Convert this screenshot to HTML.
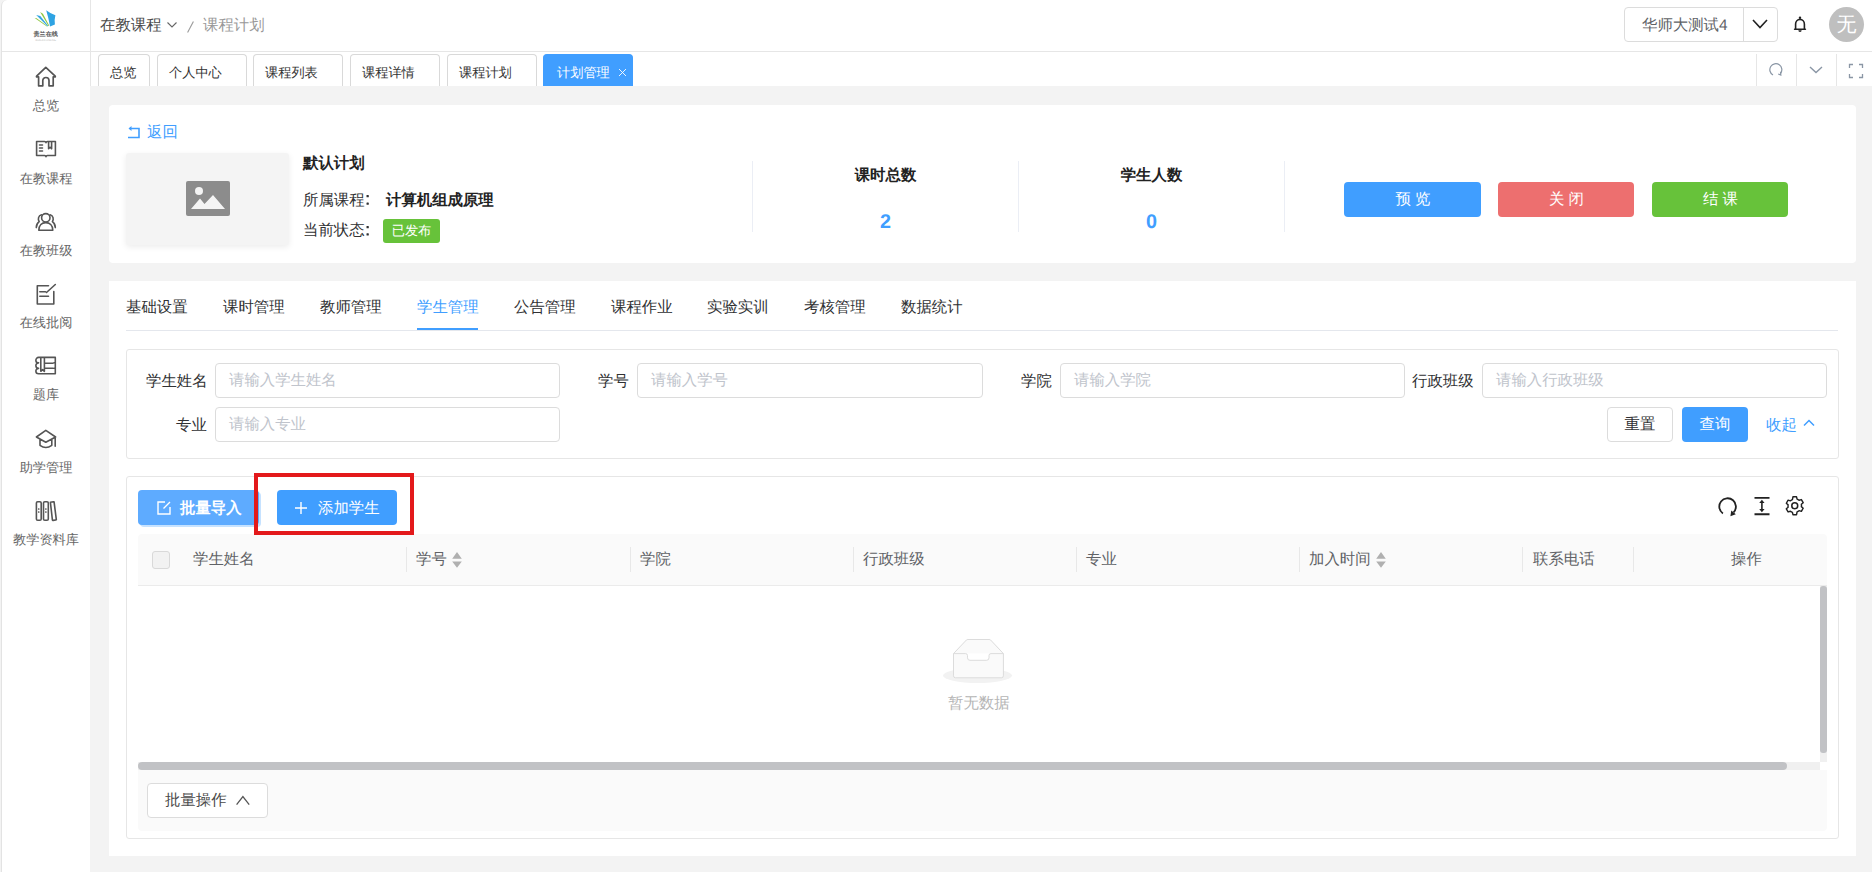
<!DOCTYPE html>
<html><head><meta charset="utf-8">
<style>
*{box-sizing:border-box;margin:0;padding:0}
html,body{width:1872px;height:872px;overflow:hidden;background:#f3f3f3;font-family:"Liberation Sans",sans-serif;color:#303133;text-rendering:geometricPrecision}
.a{position:absolute}
.t{position:absolute;white-space:nowrap;line-height:1;padding-top:1px}
#side{left:1px;top:0;width:89px;height:872px;background:#fff;border-left:1px solid #e3e3e3;border-top-left-radius:6px}
#head{left:91px;top:0;width:1781px;height:52px;background:#fff;border-bottom:1px solid #e6e6e6}
#tabbar{left:91px;top:52px;width:1781px;height:34px;background:#fff}
.tab{position:absolute;top:54px;height:32px;border:1px solid #d9d9d9;border-bottom:none;border-radius:4px 4px 0 0;background:#fff;font-size:13.2px;color:#333}
.tab span{position:absolute;top:11px;left:11px;line-height:13px}
.card{position:absolute;left:109px;width:1747px;background:#fff;border-radius:4px}
.nav{position:absolute;left:1px;width:90px;text-align:center;font-size:13.2px;color:#666;line-height:13px}
.nav svg{display:block;margin:0 auto}
.btn{position:absolute;border-radius:4px;color:#fff;font-size:15.4px;text-align:center;line-height:35px;letter-spacing:4px;padding-left:5px}
.ctab{position:absolute;top:299px;font-size:15.4px;line-height:15px;color:#303133;padding-top:1px}
.lbl{position:absolute;font-size:15.4px;line-height:15px;color:#303133;white-space:nowrap;padding-top:1px}
.inp{position:absolute;height:35px;border:1px solid #dcdcdc;border-radius:4px;background:#fff;font-size:15.4px;color:#c0c4cc;padding-left:13px;line-height:33px;white-space:nowrap}
.th{position:absolute;top:551px;font-size:15.4px;line-height:15px;color:#606266;white-space:nowrap;padding-top:1px}
.cd{position:absolute;top:547px;width:1px;height:25px;background:#e8e8e8}
</style></head><body>
<div id="side" class="a"></div>
<div id="head" class="a"></div>
<div id="tabbar" class="a"></div>
<div class="a" style="left:90px;top:0;width:1px;height:86px;background:#e6e6e6"></div>
<div class="a" style="left:2px;top:51px;width:89px;height:1px;background:#e6e6e6"></div>

<!-- logo -->
<svg class="a" style="left:30px;top:6px" width="32" height="38" viewBox="0 0 32 38">
 <path d="M4.6 12.1 L6.6 12.3 L17.6 20.2 L16.9 20.4 Z" fill="#8dc63f"/>
 <path d="M6.2 9.1 L10.3 10.1 L18.3 20.1 L17.5 20.3 Z" fill="#35a7e3"/>
 <path d="M10.1 6.0 L12.9 7.7 L19.3 19.8 L18.5 20.1 Z" fill="#8dc63f"/>
 <path d="M16.2 4.2 Q20.5 7.6 25.4 9.2 Q24.2 13.8 24.9 18.4 Q22.4 19.2 20.1 20.6 Q18.6 12.2 16.2 4.2 Z" fill="#2ea3e3"/>
 <text x="15.7" y="30" font-size="6.1" text-anchor="middle" fill="#555" font-weight="bold">贵兰在线</text>
 <text x="15.7" y="34.9" font-size="2.7" text-anchor="middle" fill="#bbb">GUILAN  ONLINE</text>
</svg>

<!-- breadcrumb -->
<div class="t" style="left:100px;top:17px;font-size:15.4px;color:#4a4a4a">在教课程</div>
<svg class="a" style="left:166px;top:20px" width="12" height="10" viewBox="0 0 12 10"><path d="M1.5 2.5 L6 7 L10.5 2.5" fill="none" stroke="#666" stroke-width="1.1"/></svg>
<svg class="a" style="left:185px;top:20px" width="10" height="14"><path d="M8.4 1.5 L2.6 12.6" stroke="#999" stroke-width="1.1"/></svg>
<div class="t" style="left:203px;top:17px;font-size:15.4px;color:#999">课程计划</div>

<!-- header right -->
<div class="a" style="left:1624px;top:7px;width:154px;height:35px;border:1px solid #dcdcdc;border-radius:4px;background:#fff"></div>
<div class="a" style="left:1743px;top:8px;width:1px;height:33px;background:#dcdcdc"></div>
<div class="t" style="left:1642px;top:17px;font-size:15.4px;color:#606266">华师大测试4</div>
<svg class="a" style="left:1751px;top:17px" width="18" height="14" viewBox="0 0 18 14"><path d="M2 3 L9 10.5 L16 3" fill="none" stroke="#222" stroke-width="1.6"/></svg>
<svg class="a" style="left:1790px;top:15px" width="20" height="20" viewBox="0 0 20 20"><circle cx="10" cy="2.8" r="1.2" fill="#222"/><path d="M5.6 14 V9 a4.4 4.6 0 0 1 8.8 0 V14 M4.6 14.2 H15.4" fill="none" stroke="#222" stroke-width="1.6" stroke-linejoin="round" stroke-linecap="round"/><path d="M8.3 15.2 a1.7 1.7 0 0 0 3.4 0 Z" fill="#222"/></svg>
<div class="a" style="left:1829px;top:7px;width:35px;height:35px;border-radius:50%;background:#bfbfbf;color:#fff;font-size:20px;line-height:37px;text-align:center">无</div>

<!-- tabs -->
<div class="tab" style="left:98px;width:52px"><span>总览</span></div>
<div class="tab" style="left:157px;width:90px"><span>个人中心</span></div>
<div class="tab" style="left:253px;width:90px"><span>课程列表</span></div>
<div class="tab" style="left:350px;width:90px"><span>课程详情</span></div>
<div class="tab" style="left:447px;width:90px"><span>课程计划</span></div>
<div class="tab" style="left:543px;width:90px;background:#409eff;border-color:#409eff;color:#fff"><span style="left:13px">计划管理</span><svg style="position:absolute;left:74px;top:13px" width="9" height="9" viewBox="0 0 9 9"><path d="M1 1 L8 8 M8 1 L1 8" stroke="#fff" stroke-width="0.9"/></svg></div>
<!-- tabbar right icons -->
<div class="a" style="left:1756px;top:54px;width:1px;height:32px;background:#e6e6e6"></div>
<div class="a" style="left:1796px;top:54px;width:1px;height:32px;background:#e6e6e6"></div>
<div class="a" style="left:1836px;top:54px;width:1px;height:32px;background:#e6e6e6"></div>
<svg class="a" style="left:1768px;top:62px" width="16" height="16" viewBox="0 0 16 16"><path d="M12.5 11.5 A6 6 0 1 0 5 13" fill="none" stroke="#8a96a5" stroke-width="1.2"/><path d="M12.5 9.8 L12.8 13 L10.2 12" fill="none" stroke="#8a96a5" stroke-width="1.2"/></svg>
<svg class="a" style="left:1808px;top:64px" width="16" height="12" viewBox="0 0 16 12"><path d="M2 3 L8 8.5 L14 3" fill="none" stroke="#8a96a5" stroke-width="1.4"/></svg>
<svg class="a" style="left:1848px;top:63px" width="16" height="16" viewBox="0 0 16 16"><path d="M1.5 5 V1.5 H5 M11 1.5 H14.5 V5 M14.5 11 V14.5 H11 M5 14.5 H1.5 V11" fill="none" stroke="#8a96a5" stroke-width="1.3"/></svg>

<!-- sidebar nav -->
<svg class="a" style="left:0;top:0" width="91" height="560" viewBox="0 0 91 560" fill="none" stroke="#555" stroke-width="1.6" stroke-linejoin="round" stroke-linecap="round">
<path d="M45.8 67.3 L36.6 76.2 Q36.2 76.9 37 76.9 H38.6 V85.8 H42.8 V80.6 a3 3 0 0 1 6.2 0 V85.8 H53.2 V76.9 H54.8 Q55.6 76.9 55.2 76.2 Z" stroke-width="1.7"/>
<path d="M36.6 141.5 H44.5 Q46 141.5 46 142.8 Q46 141.5 47.5 141.5 H55.4 V155.5 H47.5 Q46 155.5 46 156.8 Q46 155.5 44.5 155.5 H36.6 Z M39.5 145 H42.5 M39.5 148 H42.5 M39.5 151 H42.5 M48.6 141.8 V148.8 L50.1 147.3 L51.6 148.8 V141.8"/>
<circle cx="45.8" cy="217.8" r="4.2"/>
<path d="M38.8 230.3 C38.8 225.2 42 222.6 45.8 222.6 C49.6 222.6 52.8 225.2 52.8 230.3 Z M41.5 214.7 C38.3 215.6 37.6 219.3 39.2 221.6 C37.2 223 36.3 225 36.3 227.6 M50.1 214.7 C53.3 215.6 54 219.3 52.4 221.6 C54.4 223 55.3 225 55.3 227.6"/>
<path d="M48.5 285.8 H37.3 V304 H53.8 V291.5 M39.8 291.8 H45.5 M39.8 296.2 H48.5 M46.5 292.5 L55.3 284.5"/>
<path d="M38.6 357.4 H55.3 V373.8 H38.6 M38.6 357.4 a2.7 2.7 0 0 0 0 5.47 a2.7 2.7 0 0 0 0 5.47 a2.7 2.7 0 0 0 0 5.47 M55.3 362.8 H54 M55.3 368.3 H54 M40.8 357.6 V371.3 L42.6 369.6 L44.4 371.3 V357.6 M44.6 363.3 H53 M44.6 368.3 H53"/>
<path d="M36.4 437 L45.8 430.4 L55.6 437 L45.8 442.2 Z M40 439.5 V445.3 Q45.8 449.6 51.8 445.3 V439.5 M55.2 438 V446.2"/>
<rect x="36.4" y="501.8" width="4.8" height="18.4" rx="1.3"/>
<rect x="43.5" y="501.8" width="4.8" height="18.4" rx="1.3"/>
<path d="M50.4 502.3 L53.4 501.7 Q54 501.6 54.1 502.2 L56.3 519.3 Q56.4 519.9 55.8 520 L53.1 520.4 Q52.5 520.5 52.4 519.9 Z"/>
<path d="M38.8 508.5 V509.5 M38.8 511.5 V512.5 M45.9 508.5 V509.5 M45.9 511.5 V512.5" stroke-width="1.2"/>
</svg>
<div class="nav" style="top:99px">总览</div>
<div class="nav" style="top:172px">在教课程</div>
<div class="nav" style="top:244px">在教班级</div>
<div class="nav" style="top:316px">在线批阅</div>
<div class="nav" style="top:388px">题库</div>
<div class="nav" style="top:461px">助学管理</div>
<div class="nav" style="top:533px">教学资料库</div>

<!-- card 1 -->
<div class="card" style="top:105px;height:158px"></div>
<svg class="a" style="left:127px;top:125px" width="14" height="14" viewBox="0 0 14 14"><path d="M1 12.5 H12 V3.5 H2.5" fill="none" stroke="#409eff" stroke-width="1.6"/><path d="M4.5 1 L1.5 3.5 L4.5 6 Z" fill="#409eff"/></svg>
<div class="t" style="left:147px;top:124px;font-size:15.4px;color:#409eff">返回</div>
<div class="a" style="left:126px;top:153px;width:163px;height:92px;background:#f4f4f4;border-radius:3px;box-shadow:0 2px 6px rgba(0,0,0,0.08)"></div>
<svg class="a" style="left:186px;top:181px" width="44" height="35" viewBox="0 0 44 35"><rect x="0" y="0" width="44" height="35" rx="2" fill="#8c8c8c"/><circle cx="13" cy="10" r="4" fill="#f4f4f4"/><path d="M5 28 L14 17.5 L18.5 23 L27 14 L39 28 Z" fill="#f4f4f4"/></svg>
<div class="t" style="left:303px;top:155px;font-size:15.4px;font-weight:bold;color:#222">默认计划</div>
<div class="t" style="left:303px;top:192px;font-size:15.4px;color:#303133">所属课程</div>
<svg class="a" style="left:365px;top:193px" width="6" height="14"><rect x="1.5" y="2" width="2.3" height="2.3" rx="0.6" fill="#303133"/><rect x="1.5" y="9.5" width="2.3" height="2.3" rx="0.6" fill="#303133"/></svg>
<div class="t" style="left:386px;top:192px;font-size:15.4px;font-weight:bold;color:#222">计算机组成原理</div>
<div class="t" style="left:303px;top:222px;font-size:15.4px;color:#303133">当前状态</div>
<svg class="a" style="left:365px;top:224px" width="6" height="14"><rect x="1.5" y="2" width="2.3" height="2.3" rx="0.6" fill="#303133"/><rect x="1.5" y="9.2" width="2.3" height="2.3" rx="0.6" fill="#303133"/></svg>
<div class="a" style="left:383px;top:219px;width:57px;height:24px;background:#67c23a;border-radius:3px;color:#fff;font-size:13.2px;line-height:24px;text-align:center">已发布</div>

<div class="a" style="left:752px;top:161px;width:1px;height:71px;background:#ebeef5"></div>
<div class="a" style="left:1018px;top:161px;width:1px;height:71px;background:#ebeef5"></div>
<div class="a" style="left:1284px;top:161px;width:1px;height:71px;background:#ebeef5"></div>
<div class="t" style="left:753px;width:265px;text-align:center;top:167px;font-size:15.4px;font-weight:bold;color:#222">课时总数</div>
<div class="t" style="left:1019px;width:265px;text-align:center;top:167px;font-size:15.4px;font-weight:bold;color:#222">学生人数</div>
<div class="t" style="left:753px;width:265px;text-align:center;top:212px;font-size:19.8px;font-weight:bold;color:#409eff">2</div>
<div class="t" style="left:1019px;width:265px;text-align:center;top:212px;font-size:19.8px;font-weight:bold;color:#409eff">0</div>

<div class="btn" style="left:1344px;top:182px;width:137px;height:35px;background:#409eff">预览</div>
<div class="btn" style="left:1498px;top:182px;width:136px;height:35px;background:#ed6f6f">关闭</div>
<div class="btn" style="left:1652px;top:182px;width:136px;height:35px;background:#67c23a">结课</div>

<!-- card 2 -->
<div class="card" style="top:281px;height:575px;border-radius:0"></div>
<div class="ctab" style="left:126px">基础设置</div>
<div class="ctab" style="left:223px">课时管理</div>
<div class="ctab" style="left:320px">教师管理</div>
<div class="ctab" style="left:417px;color:#409eff">学生管理</div>
<div class="ctab" style="left:514px">公告管理</div>
<div class="ctab" style="left:611px">课程作业</div>
<div class="ctab" style="left:707px">实验实训</div>
<div class="ctab" style="left:804px">考核管理</div>
<div class="ctab" style="left:901px">数据统计</div>
<div class="a" style="left:126px;top:329px;width:1712px;height:2px;background:#e4e7ed;height:1px;top:330px"></div>
<div class="a" style="left:417px;top:328px;width:61px;height:2px;background:#409eff"></div>

<!-- filter -->
<div class="a" style="left:126px;top:349px;width:1713px;height:110px;border:1px solid #e6e6e6;border-radius:3px"></div>
<div class="lbl" style="left:146px;top:373px">学生姓名</div>
<div class="inp" style="left:215px;top:363px;width:345px">请输入学生姓名</div>
<div class="lbl" style="left:598px;top:373px">学号</div>
<div class="inp" style="left:637px;top:363px;width:346px">请输入学号</div>
<div class="lbl" style="left:1021px;top:373px">学院</div>
<div class="inp" style="left:1060px;top:363px;width:345px">请输入学院</div>
<div class="lbl" style="left:1412px;top:373px">行政班级</div>
<div class="inp" style="left:1482px;top:363px;width:345px">请输入行政班级</div>
<div class="lbl" style="left:176px;top:417px">专业</div>
<div class="inp" style="left:215px;top:407px;width:345px">请输入专业</div>
<div class="a" style="left:1607px;top:407px;width:66px;height:35px;border:1px solid #dcdcdc;border-radius:4px;font-size:15.4px;line-height:33px;text-align:center;color:#303133">重置</div>
<div class="a" style="left:1682px;top:407px;width:66px;height:35px;background:#409eff;border-radius:4px;font-size:15.4px;line-height:35px;text-align:center;color:#fff">查询</div>
<div class="t" style="left:1766px;top:417px;font-size:15.4px;color:#409eff">收起</div>
<svg class="a" style="left:1802px;top:417px" width="14" height="12" viewBox="0 0 14 12"><path d="M2 8.5 L7 3.5 L12 8.5" fill="none" stroke="#409eff" stroke-width="1.5"/></svg>

<!-- table panel -->
<div class="a" style="left:126px;top:476px;width:1713px;height:363px;border:1px solid #e6e6e6;border-radius:3px"></div>
<div class="a" style="left:138px;top:490px;width:121px;height:35px;background:#5eabff;border-radius:4px;box-shadow:2px 2px 0 0 #c6e2ff"></div>
<svg class="a" style="left:156px;top:500px" width="16" height="16" viewBox="0 0 16 16"><path d="M9 2 H2 V14 H14 V7 M7.5 8.5 L14 2" fill="none" stroke="#fff" stroke-width="1.4"/></svg>
<div class="t" style="left:180px;top:500px;font-size:15.4px;font-weight:bold;color:#fff">批量导入</div>
<div class="a" style="left:277px;top:490px;width:120px;height:35px;background:#409eff;border-radius:4px"></div>
<svg class="a" style="left:293px;top:500px" width="16" height="16" viewBox="0 0 16 16"><path d="M8 2 V14 M2 8 H14" fill="none" stroke="#fff" stroke-width="1.4"/></svg>
<div class="t" style="left:318px;top:500px;font-size:15.4px;color:#fff">添加学生</div>
<div class="a" style="left:254px;top:473px;width:160px;height:62px;border:4px solid #e3191b;z-index:5"></div>

<svg class="a" style="left:1716px;top:495px" width="24" height="24" viewBox="0 0 24 24"><path d="M6.9 18.4 A8.3 8.3 0 1 1 17.6 17.3" fill="none" stroke="#222" stroke-width="1.8"/><path d="M14.4 21.2 L15.3 15.6 L19.8 19.2 Z" fill="#222"/></svg>
<svg class="a" style="left:1752px;top:494px" width="20" height="24" viewBox="0 0 20 24"><path d="M2.5 3.9 H17.5 M2.5 20.2 H17.5" fill="none" stroke="#222" stroke-width="1.9"/><path d="M9.9 7.5 V16.5" stroke="#222" stroke-width="1.6"/><path d="M7.2 9 L9.9 5.8 L12.6 9 Z M7.2 15 L9.9 18.2 L12.6 15 Z" fill="#222"/></svg>
<svg class="a" style="left:1784px;top:495px" width="21.5" height="21.5" viewBox="0 0 24 24"><circle cx="12" cy="12" r="3.3" fill="none" stroke="#222" stroke-width="1.7"/><path d="M10 2 h4 l0.6 2.6 a8 8 0 0 1 2.2 1.3 l2.6-0.8 2 3.5 -2 1.8 a8 8 0 0 1 0 2.6 l2 1.8 -2 3.5 -2.6-0.8 a8 8 0 0 1 -2.2 1.3 L14 22 h-4 l-0.6-2.6 a8 8 0 0 1 -2.2-1.3 l-2.6 0.8 -2-3.5 2-1.8 a8 8 0 0 1 0-2.6 l-2-1.8 2-3.5 2.6 0.8 a8 8 0 0 1 2.2-1.3 Z" fill="none" stroke="#222" stroke-width="1.6" stroke-linejoin="round"/></svg>

<!-- table header -->
<div class="a" style="left:138px;top:534px;width:1689px;height:52px;background:#fafafa;border-bottom:1px solid #ebebeb;border-radius:4px 4px 0 0"></div>
<div class="a" style="left:152px;top:551px;width:18px;height:18px;border:1px solid #d9d9d9;border-radius:3px;background:#f2f2f2"></div>
<div class="th" style="left:193px">学生姓名</div>
<div class="cd" style="left:406px"></div>
<div class="th" style="left:416px">学号</div>
<svg class="a" style="left:451px;top:551px" width="12" height="18" viewBox="0 0 12 18"><path d="M1.2 7.8 L6 0.9 L10.8 7.8 Z M1.2 10.5 L6 16.8 L10.8 10.5 Z" fill="#b0b0b0"/></svg>
<div class="cd" style="left:630px"></div>
<div class="th" style="left:640px">学院</div>
<div class="cd" style="left:853px"></div>
<div class="th" style="left:863px">行政班级</div>
<div class="cd" style="left:1076px"></div>
<div class="th" style="left:1086px">专业</div>
<div class="cd" style="left:1299px"></div>
<div class="th" style="left:1309px">加入时间</div>
<svg class="a" style="left:1375px;top:551px" width="12" height="18" viewBox="0 0 12 18"><path d="M1.2 7.8 L6 0.9 L10.8 7.8 Z M1.2 10.5 L6 16.8 L10.8 10.5 Z" fill="#b0b0b0"/></svg>
<div class="cd" style="left:1522px"></div>
<div class="th" style="left:1533px">联系电话</div>
<div class="cd" style="left:1633px"></div>
<div class="th" style="left:1731px">操作</div>

<!-- empty -->
<svg class="a" style="left:943px;top:638px" width="70" height="46" viewBox="0 0 70 46"><ellipse cx="34.5" cy="37.5" rx="34.5" ry="7.5" fill="#f2f2f2"/><path d="M10.5 15.6 L23.5 1.9 Q24 1.5 25 1.5 H46 Q47 1.5 47.5 1.9 L60.4 15.6 V37.8 a2 2 0 0 1 -2 2 H12.5 a2 2 0 0 1 -2 -2 Z" fill="#fafafa" stroke="#dcdcdc" stroke-width="1"/><path d="M10.5 15.6 H22.5 a2 2 0 0 1 2 2 V19.8 a2.5 2.5 0 0 0 2.5 2.5 H43.5 a2.5 2.5 0 0 0 2.5 -2.5 V17.6 a2 2 0 0 1 2 -2 H60.4" fill="#fff" stroke="#dcdcdc" stroke-width="1"/></svg>
<div class="t" style="left:948px;top:695px;font-size:15.4px;color:#b5b5b5">暂无数据</div>

<!-- scrollbars -->
<div class="a" style="left:1820px;top:586px;width:7px;height:176px;background:#f0f0f0"></div>
<div class="a" style="left:1820px;top:586px;width:7px;height:167px;background:#c1c2c5;border-radius:3px"></div>
<div class="a" style="left:138px;top:762px;width:1682px;height:8px;background:#f0f0f0"></div>
<div class="a" style="left:138px;top:762px;width:1649px;height:8px;background:#c1c2c5;border-radius:4px"></div>

<!-- footer -->
<div class="a" style="left:138px;top:770px;width:1689px;height:61px;background:#fafafa;border-radius:0 0 4px 4px"></div>
<div class="a" style="left:147px;top:783px;width:121px;height:35px;border:1px solid #dcdcdc;border-radius:4px;background:#fff"></div>
<div class="t" style="left:165px;top:792px;font-size:15.4px;color:#4a4a4a">批量操作</div>
<svg class="a" style="left:235px;top:794px" width="16" height="12" viewBox="0 0 16 12"><path d="M1.6 10.6 L7.9 2.6 L14.2 10.6" fill="none" stroke="#555" stroke-width="1.3"/></svg>
</body></html>
